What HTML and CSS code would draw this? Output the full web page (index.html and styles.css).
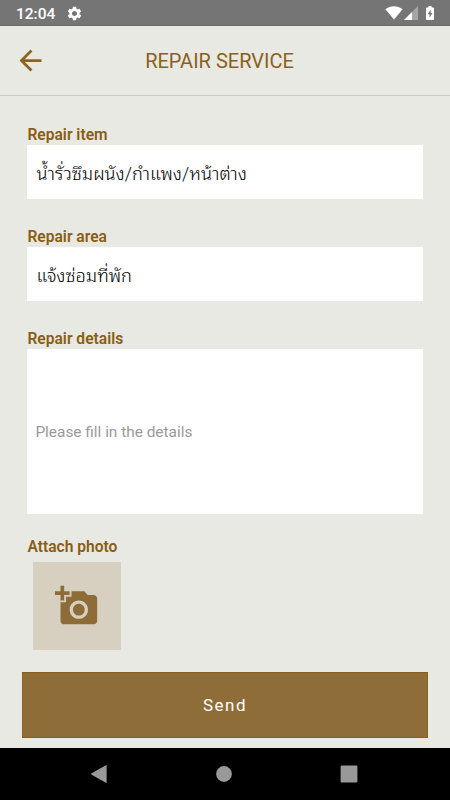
FILE: index.html
```html
<!DOCTYPE html>
<html lang="en">
<head>
  <meta charset="UTF-8">
  <meta name="viewport" content="width=device-width, initial-scale=1.0">
  <title>Repair Service</title>
  <link rel="stylesheet" href="styles.css">
</head>
<body>

  <div class="status-bar">
    <span class="clock">12:04</span>
    <svg class="gear" viewBox="0 0 24 24"><path d="M19.14 12.94c.04-.3.06-.61.06-.94 0-.32-.02-.64-.07-.94l2.03-1.58c.18-.14.23-.41.12-.61l-1.92-3.32c-.12-.22-.37-.29-.59-.22l-2.39.96c-.5-.38-1.03-.7-1.62-.94l-.36-2.54c-.04-.24-.24-.41-.48-.41h-3.84c-.24 0-.43.17-.47.41l-.36 2.54c-.59.24-1.13.57-1.62.94l-2.39-.96c-.22-.08-.47 0-.59.22L2.74 8.87c-.12.21-.08.47.12.61l2.03 1.58c-.05.3-.09.63-.09.94s.02.64.07.94l-2.03 1.58c-.18.14-.23.41-.12.61l1.92 3.32c.12.22.37.29.59.22l2.39-.96c.5.38 1.03.7 1.62.94l.36 2.54c.05.24.24.41.48.41h3.84c.24 0 .44-.17.47-.41l.36-2.54c.59-.24 1.13-.56 1.62-.94l2.39.96c.22.08.47 0 .59-.22l1.92-3.32c.12-.22.07-.47-.12-.61l-2.01-1.58zM12 15.6c-1.98 0-3.6-1.62-3.6-3.6s1.62-3.6 3.6-3.6 3.6 1.62 3.6 3.6-1.62 3.6-3.6 3.6z"/></svg>
    <div class="status-icons">
      <svg class="wifi" viewBox="0 0 18 14"><path d="M9 13.5 0.4 3.2C5.4-.7 12.6-.7 17.6 3.2z"/></svg>
      <svg class="signal" viewBox="0 0 14 14"><path class="faded" d="M14 0v14H0z"/><path d="M8 6v8H0z"/></svg>
      <svg class="battery" viewBox="0 0 8 14"><path fill-rule="evenodd" d="M2.4 0h3.2v1.4h1.6c.5 0 .8.3.8.8v11c0 .5-.3.8-.8.8H.8c-.5 0-.8-.3-.8-.8v-11c0-.5.3-.8.8-.8h1.6zM4.7 3.6 1.6 8.3h1.9v3.5l3-4.8H4.7z"/></svg>
    </div>
  </div>

  <div class="header">
    <svg class="back" viewBox="0 0 24 24"><path d="M20 11H7.83l5.59-5.59L12 4l-8 8 8 8 1.41-1.41L7.83 13H20v-2z"/></svg>
    <h1>REPAIR SERVICE</h1>
  </div>

  <form class="content">
    <div class="field">
      <label for="item">Repair item</label>
      <div class="box" id="item" lang="th">น้ำรั่วซึมผนัง/กำแพง/หน้าต่าง</div>
    </div>
    <div class="field">
      <label for="area">Repair area</label>
      <div class="box" id="area" lang="th">แจ้งซ่อมที่พัก</div>
    </div>
    <div class="field details">
      <label for="details">Repair details</label>
      <input class="box" id="details" type="text" placeholder="Please fill in the details">
    </div>
    <div class="field attach">
      <label>Attach photo</label>
      <div class="photo">
        <svg viewBox="0 0 24 24"><path d="M3 4V1h2v3h3v2H5v3H3V6H0V4h3zm3 6V7h3V4h7l1.83 2H21c1.1 0 2 .9 2 2v12c0 1.1-.9 2-2 2H5c-1.1 0-2-.9-2-2V10h3zm7 9c2.76 0 5-2.24 5-5s-2.24-5-5-5-5 2.24-5 5 2.24 5 5 5zm-3.2-5c0 1.77 1.43 3.2 3.2 3.2s3.2-1.43 3.2-3.2-1.43-3.2-3.2-3.2-3.2 1.43-3.2 3.2z"/></svg>
      </div>
    </div>
    <button class="send" type="button">Send</button>
  </form>

  <div class="nav-bar">
    <svg viewBox="0 0 18 18"><path d="M16.6.6v16.8c0 .5-.4.6-.8.4L1.3 9.5c-.5-.3-.5-.7 0-1L15.8.2c.4-.2.8-.1.8.4z"/></svg>
    <svg viewBox="0 0 18 18"><circle cx="9" cy="9" r="7.9"/></svg>
    <svg viewBox="0 0 18 18"><rect x=".6" y=".6" width="16.8" height="16.8" rx="1.2"/></svg>
  </div>

</body>
</html>
```

FILE: styles.css
```css
* {
  box-sizing: border-box;
}
body {
  margin: 0;
  height: 800px;
  display: flex;
  flex-direction: column;
  background-color: #e8e9e2;
  font-family: Roboto, "Noto Sans Thai Looped", "Noto Looped Thai", Loma, "Noto Sans", sans-serif;
  overflow: hidden;
}
svg {
  display: block;
}

/* status bar */
.status-bar {
  flex: none;
  height: 26px;
  display: flex;
  align-items: center;
  padding: 0 15px;
  background-color: #757575;
  border-bottom: 1px solid #6b6b6b;
  color: #fff;
  fill: #fff;
}
.clock {
  width: 51px;
  padding: 2px 0 0 1px;
  font-size: 15.5px;
  font-weight: 500;
}
.gear {
  width: 17px;
  height: 17px;
  margin-top: 1px;
}
.status-icons {
  display: flex;
  align-items: center;
  margin-left: auto;
  padding-top: 1px;
}
.wifi {
  width: 18px;
  height: 14px;
}
.signal {
  width: 14px;
  height: 14px;
  margin-left: 1px;
}
.signal .faded {
  opacity: 0.35;
}
.battery {
  width: 8px;
  height: 14px;
  margin: 0 1px 0 8px;
}

/* page header */
.header {
  flex: none;
  height: 70px;
  display: flex;
  align-items: center;
  padding: 0 14px;
  border-bottom: 1px solid #c9cac5;
}
.header h1 {
  flex: 1;
  margin: 1px 44px 0 0;
  text-align: center;
  color: #8a611c;
  font-size: 20px;
  font-weight: 400;
}
.back {
  width: 33px;
  height: 33px;
  fill: #8e6320;
}

/* form */
.content {
  flex: 1;
  display: flex;
  flex-direction: column;
  padding: 29px 22px 10px;
}
.field {
  margin: 0 5.4px 28px;
}
.field label {
  display: block;
  height: 20px;
  line-height: 21px;
  color: #8a5d14;
  font-size: 15.6px;
  font-weight: 600;
}
.box {
  display: flex;
  align-items: center;
  width: 100%;
  height: 54.2px;
  padding: 0 9px 2px;
  border: none;
  background-color: #fff;
  color: #000;
  font-size: 18.2px;
  font-weight: 300;
}
.details .box {
  height: 165px;
  padding: 0 8px;
  font-family: inherit;
  font-size: 15.4px;
  font-weight: 400;
}
.details .box::placeholder {
  color: #999;
}
.details {
  margin-bottom: 22px;
}
.attach {
  margin-bottom: 0;
}
.attach label {
  height: 25.4px;
  line-height: 22px;
}
.photo {
  width: 87.6px;
  height: 88px;
  display: flex;
  align-items: center;
  justify-content: center;
  margin-left: 5.6px;
  background-color: #d7cfc0;
}
.photo svg {
  width: 44px;
  height: 44px;
  fill: #8e6c38;
}
.send {
  height: 66px;
  margin-top: auto;
  border: 1px solid #8b601a;
  background-color: #8e6d39;
  color: #fff;
  font-family: inherit;
  font-size: 17px;
  letter-spacing: 1.5px;
}

/* navigation bar */
.nav-bar {
  flex: none;
  height: 52px;
  display: flex;
  align-items: center;
  justify-content: space-between;
  padding: 0 92px 0 90px;
  background-color: #000;
  fill: #999;
}
.nav-bar svg {
  width: 18px;
  height: 18px;
}
```
